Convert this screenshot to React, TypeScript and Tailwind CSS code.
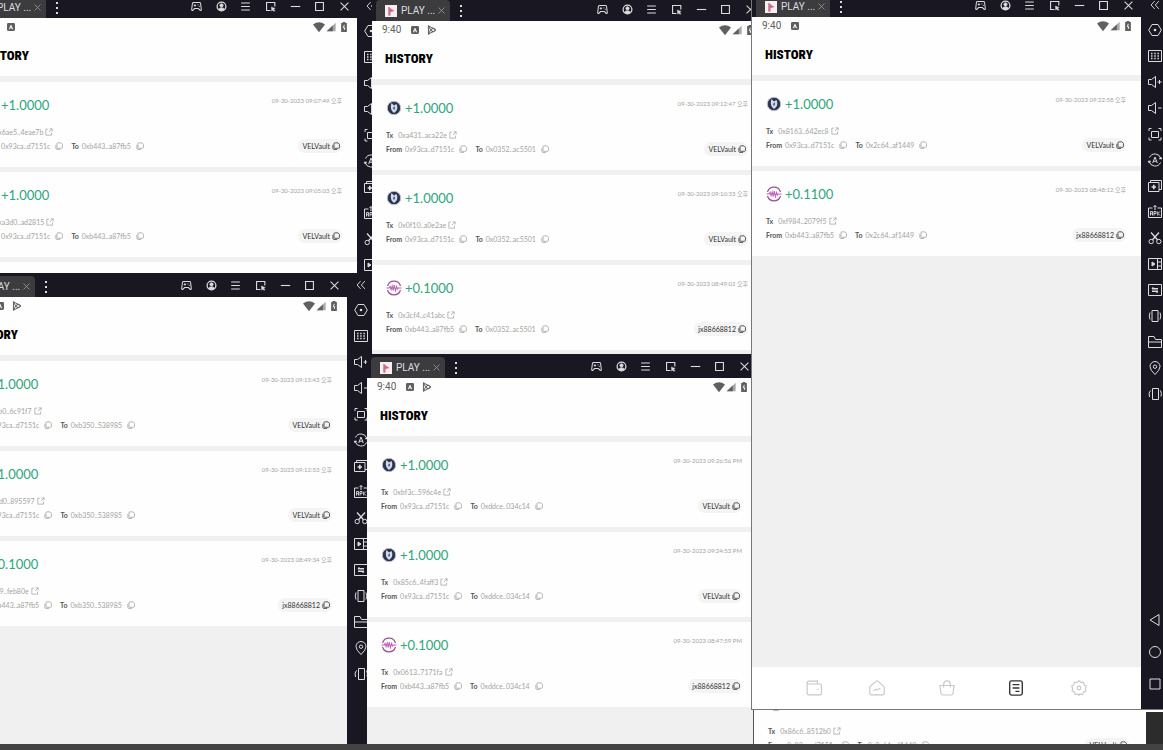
import { ReactNode } from 'react'
import { clsx } from 'clsx'

type Transfer = {
  amount: string
  coin: 'vel' | 'wave'
  date: string
  tx: string
  from: string
  to: string
  tag: string
}

/* ---------- icons ---------- */

function Icon({ className = 'size-3.5', children }: { className?: string; children: ReactNode }) {
  return (
    <svg
      viewBox="0 0 14 14"
      className={clsx('shrink-0', className)}
      fill="none"
      stroke="currentColor"
      strokeWidth="1"
      aria-hidden="true"
    >
      {children}
    </svg>
  )
}

const titleIcons: { label: string; art: ReactNode }[] = [
  {
    label: 'Gamepad',
    art: (
      <>
        <path d="M3.2 2h7.6q1.2 0 1.4 1.2l.9 7.6q0 1.4-1.3 1.2L9.4 9.6H4.6L2.2 12Q.9 12.2.9 10.8l.9-7.6Q2 2 3.2 2z" strokeWidth="1.3" />
        <path d="M3.5 5.6h3M5 4.1v3M8.2 5h1.2M10 6.8h1.2" strokeWidth="1.2" />
      </>
    ),
  },
  {
    label: 'Account',
    art: (
      <>
        <circle cx="7" cy="7" r="5.6" strokeWidth="1.6" />
        <circle cx="7" cy="5.5" r="2" fill="currentColor" />
        <path d="M3 10.5q4-4 8 0-4 3.5-8 0z" fill="currentColor" />
      </>
    ),
  },
  { label: 'Menu', art: <path d="M1.5 2.5h11M1.5 7h11M1.5 11.5h11" strokeWidth="1.4" /> },
  {
    label: 'Resize',
    art: (
      <>
        <path d="M7 12H2V2h10.5v5" strokeWidth="1.4" />
        <path d="M8 7.5l5 2-2 .8 1.6 2-1.2 1-1.6-2-1.2 1.7z" fill="currentColor" strokeWidth=".5" />
      </>
    ),
  },
  { label: 'Minimize', art: <path d="M1 7h12" strokeWidth="1.4" /> },
  { label: 'Maximize', art: <path d="M2 2h10v10H2z" strokeWidth="1.4" /> },
  { label: 'Close', art: <path d="M2 2l10 10M12 2L2 12" strokeWidth="1.3" /> },
]

const sideIcons: { label: string; art: ReactNode }[] = [
  {
    label: 'Settings',
    art: (
      <>
        <path d="M4 1.5h6L13.3 7 10 12.5H4L.7 7z" />
        <circle cx="7" cy="7" r="1.3" fill="currentColor" stroke="none" />
      </>
    ),
  },
  {
    label: 'Keyboard',
    art: (
      <>
        <path d="M.5 1.5h13v11H.5z" />
        <path d="M3 4.5h8M3 7h8M3 9.5h8" strokeDasharray="1.5 1.7" strokeWidth="1.5" />
      </>
    ),
  },
  { label: 'Volume up', art: <path d="M.5 4.5h3l4-3v11l-4-3h-3zM9.5 7h4M11.5 5v4" /> },
  { label: 'Volume down', art: <path d="M.5 4.5h3l4-3v11l-4-3h-3zM10 7h3.5" /> },
  {
    label: 'Full screen',
    art: <path d="M3.5 4.5h7v6h-7zM1 4V1.5h2.5M10.5 1.5H13V4M13 10.5V13h-2.5M3.5 13H1v-2.5" />,
  },
  {
    label: 'Auto rotate',
    art: (
      <>
        <path d="M1.5 4.5a6 6 0 0 1 11.3 1M12.5 9.5A6 6 0 0 1 1.2 8.5" />
        <path d="M11.2 6h3l-1.3-2zM-.2 8h3L1 10z" fill="currentColor" strokeWidth=".5" />
        <path d="M4.7 10L7 4l2.3 6M5.5 8.2h3" />
      </>
    ),
  },
  {
    label: 'Multi instance',
    art: (
      <>
        <path d="M.5 3.5h10.5v9H.5zM2.5 3.5v-2h11v9H11" />
        <path d="M3.6 8h4.4M5.8 5.8v4.4" strokeWidth="1.6" />
      </>
    ),
  },
  {
    label: 'Install APK',
    art: (
      <>
        <path d="M4.5 3H.5v9.5h13V3h-4M7 5V.5M5.5 2L7 .5 8.5 2" />
        <path d="M2.5 10.5v-4h2v2.2h-2M4.5 8.7v1.8M6 10.5v-4h2v2.2H6M9.7 6.5v4M12 6.5l-2 2 2 2" strokeWidth=".9" />
      </>
    ),
  },
  {
    label: 'Cut',
    art: (
      <>
        <circle cx="3.2" cy="10.5" r="2.2" />
        <circle cx="10.8" cy="10.5" r="2.2" />
        <path d="M4.5 8.8L11 1.5M9.5 8.8L3 1.5" strokeWidth="1.3" />
      </>
    ),
  },
  {
    label: 'Record',
    art: (
      <>
        <path d="M.5 1.5h13v11H.5zM9.5 1.5v11M9.5 5h4M9.5 9h4" />
        <path d="M4 5l3 2-3 2z" fill="currentColor" />
      </>
    ),
  },
  {
    label: 'Sync',
    art: (
      <>
        <path d="M.5 1.5h13v11H.5z" />
        <path d="M4 5.8h6M4 8.3h6M5.5 4.5L4 5.8M8.5 9.6L10 8.3" strokeWidth="1.4" />
      </>
    ),
  },
  { label: 'Shake', art: <path d="M4 1.5h6v11H4zM2 3.5Q.5 7 2 10.5M12 3.5q1.5 3.5 0 7" /> },
  { label: 'Folder', art: <path d="M.5 12.5v-11H6L7.5 4.5h6v8zM.5 7h13" /> },
  {
    label: 'Location',
    art: (
      <>
        <path d="M7 13.5Q2 9 2 5.5a5 5 0 0 1 10 0Q12 9 7 13.5z" />
        <circle cx="7" cy="5.7" r="1.7" />
      </>
    ),
  },
  { label: 'Rotate', art: <path d="M4.5 1.5h6v11h-6zM2.5 3.5Q.2 5.5 1.5 10M12.5 3.5q1.5 3 .5 6" /> },
]

const systemKeys: { label: string; art: ReactNode }[] = [
  { label: 'Back', art: <path d="M11 1.5v11L2 7z" /> },
  { label: 'Home', art: <circle cx="7" cy="7" r="5.5" /> },
  { label: 'Recents', art: <path d="M2 2h10v10H2z" /> },
]

function CopyIcon() {
  return (
    <Icon className="size-2">
      <path
        d="M5 1.5h5.5L13 4v5.5q0 1.5-1.5 1.5H5q-1.5 0-1.5-1.5V3Q3.5 1.5 5 1.5zM1.500 5v6q0 2 2 2H9"
        strokeWidth="1.4"
      />
    </Icon>
  )
}

function LinkIcon() {
  return (
    <Icon className="size-2">
      <path d="M5 2H1.5v10.5h10V8M8 1.5h4.5V6M12.5 1.5L7 7" strokeWidth="1.3" />
    </Icon>
  )
}

function Coin({ kind }: { kind: Transfer['coin'] }) {
  if (kind === 'wave') {
    return (
      <svg viewBox="0 0 16 16" className="size-4" fill="none" aria-hidden="true">
        <path d="M1.500 6a6.800 6.800 0 0 1 13 0M1.500 10a6.800 6.800 0 0 0 13 0" stroke="#94568f" strokeWidth="1.200" />
        <path
          d="M.5 8h2.800l.8-1.500 1 3L6.200 6l1 4.500L8.200 5l1.200 5.500L10.600 6.500l.9 2.500.8-1h3.200"
          stroke="#c25fc0"
          strokeWidth="1.100"
        />
      </svg>
    )
  }
  return (
    <svg viewBox="0 0 16 16" className="size-4" fill="none" aria-hidden="true">
      <circle cx="8" cy="8" r="6.7" fill="#2b3450" stroke="#b9bfcc" strokeWidth="1" />
      <path d="M5.500 3L8 5.500 10.500 4q1.800 4-.3 7L8 13l-2-2Q3.800 7.500 5.500 3z" fill="#d5dbe6" />
      <path d="M8 6.500l1 .5-.3 2L8 10l-1-1.500z" fill="#46536f" />
    </svg>
  )
}

/* ---------- app screen ---------- */

function StatusBar({ hasPlay }: { hasPlay?: boolean }) {
  return (
    <div className="flex h-[18px] items-center justify-between pr-2 pl-2.5 text-[#5f5f5f]">
      <div className="flex items-center gap-2">
        <span className="w-5 font-[Roboto,sans-serif] text-[10px] leading-3">9:40</span>
        <Icon className="ml-px size-2">
          <rect x="0" y="0" width="14" height="14" rx="2" fill="currentColor" stroke="none" />
          <path d="M4 11l3-7 3 7M5 8.5h4" stroke="#fff" strokeWidth="1.6" />
        </Icon>
        {hasPlay && (
          <Icon className="size-2.5">
            <path d="M2 1l10.5 6L2 13zM2 1l3 6-3 6M5 7l3.5-3M5 7l3.5 3" strokeWidth="1.4" />
            <circle cx="9" cy="7" r="2.5" />
          </Icon>
        )}
      </div>
      <div className="flex items-center gap-px">
        <Icon className="size-3">
          <path d="M0 4q7-5 14 0L7 13z" fill="currentColor" stroke="none" />
        </Icon>
        <Icon className="size-2.5">
          <path d="M13.5 1v12H1z" fill="currentColor" stroke="none" opacity=".55" />
          <path d="M9.5 5v8H1z" fill="currentColor" stroke="none" />
        </Icon>
        <Icon className="ml-0.5 size-2.5">
          <path d="M5 0h4v1.5h2V14H3V1.5h2z" fill="currentColor" stroke="none" />
          <path d="M7.5 4L6 8h2l-.5 3" stroke="#fff" strokeWidth="1.3" />
        </Icon>
      </div>
    </div>
  )
}

function Address({ label, value, link }: { label: string; value: string; link?: boolean }) {
  return (
    <span className="flex items-center gap-[3px]">
      <b className={clsx('font-bold text-[#555]', link && 'mr-0.5')}>{label}</b>
      {link ? (
        <a href="#tx" className="flex items-center gap-0.5">
          {value}
          <LinkIcon />
        </a>
      ) : (
        <>
          {value}
          <button type="button" aria-label={`Copy ${value}`} className="ml-0.5">
            <CopyIcon />
          </button>
        </>
      )}
    </span>
  )
}

function TransferCard({ item }: { item: Transfer }) {
  return (
    <li className="flex justify-between bg-[#fefefe] py-3.5 pr-[15px] pl-3.5">
      <div className="flex flex-col text-[7px] leading-[14px] whitespace-nowrap text-[#a3a3a3]">
        <div className="mb-[11px] flex h-[18px] items-center gap-[3px]">
          <Coin kind={item.coin} />
          <strong className="text-[13px] font-normal text-[#2ea57c]">{item.amount}</strong>
        </div>
        <Address label="Tx" value={item.tx} link />
        <div className="flex gap-2">
          <Address label="From" value={item.from} />
          <Address label="To" value={item.to} />
        </div>
      </div>
      <div className="flex flex-col items-end justify-between whitespace-nowrap">
        <time className="text-[6px] leading-[10px] text-[#a3a3a3]">{item.date}</time>
        <button
          type="button"
          className="flex h-3.5 items-center gap-0.5 rounded-full bg-[#f4f4f4] pr-0.5 pl-1 text-[7px] text-[#333]"
        >
          {item.tag}
          <CopyIcon />
        </button>
      </div>
    </li>
  )
}

const tabs: { label: string; wide?: boolean; active?: boolean; art: ReactNode }[] = [
  {
    label: 'Wallet',
    art: <path d="M1 2.5Q1 1 2.5 1H10v2.5M1 2.5q0 1 1.5 1H12q1.5 0 1.5 1.5v6.5Q13.500 13 12 13H2.500Q1 13 1 11.500zM9.800 8.300H11" />,
  },
  {
    label: 'Market',
    art: <path d="M7 .8q.5 0 1 .4L13.3 6v5.5q0 1.500-1.500 1.500H2.200Q.7 13 .7 11.500V6L6 1.200q.5-.4 1-.4zM4 9.500l2-1.500 1.500.7L10 7" />,
  },
  {
    label: 'Shop',
    wide: true,
    art: <path d="M.8 4.800h12.400l-1 7q-.2 1.300-1.400 1.300H3.200Q2 13.100 1.800 11.800zM4 6.500V5Q4 .8 7 .8T10 5v1.500" />,
  },
  {
    label: 'History',
    active: true,
    art: (
      <path
        d="M3 .8h8q1.500 0 1.500 1.500v9.400q0 1.500-1.500 1.500H3q-1.500 0-1.500-1.500V2.300Q1.500.8 3 .8zM4 4h6M4 7h6M6.500 10H10"
        strokeWidth="1.200"
      />
    ),
  },
  {
    label: 'Setup',
    art: (
      <>
        <path d="M7 .6l1.700 1.500 2.300-.1.500 2.200 1.900 1.300L12.600 7.500l.4 2.200-2 .9-1 2.100-2.100-.5L7 13.500l-1.200-1.300-2.200.4-.8-2.100-1.900-1L1.400 7.300.6 5.300l1.900-1.200L3 2l2.300.1z" />
        <circle cx="7" cy="7" r="1.600" />
      </>
    ),
  },
]

function TabBar() {
  return (
    <nav className="flex h-[42px] shrink-0 items-center justify-between bg-white px-[54px]">
      {tabs.map((tab) => (
        <button
          key={tab.label}
          type="button"
          aria-label={tab.label}
          className={clsx(tab.wide && 'px-1.5', tab.active ? 'text-[#333]' : 'text-[#c8c8c8]')}
        >
          <Icon className="size-4">{tab.art}</Icon>
        </button>
      ))}
    </nav>
  )
}

/* ---------- emulator window ---------- */

function Emulator({
  className,
  items,
  hasPlay,
  hasTabs,
}: {
  className: string
  items: Transfer[]
  hasPlay?: boolean
  hasTabs?: boolean
}) {
  return (
    <section className={clsx('absolute flex flex-col overflow-hidden bg-[#191722] text-[#dcdce0]', className)}>
      <header className="flex h-6 shrink-0">
        <div className="flex flex-1 items-end justify-between pr-[7px] pl-1">
          <div className="flex items-center">
            <div className="flex h-[21px] w-[74px] items-center gap-1 rounded-t bg-[#3c3c3f] pl-[9px]">
              <svg viewBox="0 0 12 12" className="size-3 shrink-0" aria-hidden="true">
                <path d="M0 0h12v12H0z" fill="#f7eef0" />
                <path d="M3.5 2l6 4-4 1v3.5h-2z" fill="#d8638a" />
                <path d="M3.5 2h1.2v8.5H3.5z" fill="#b0809a" />
              </svg>
              <span className="w-8 font-[Roboto,sans-serif] text-[10px] whitespace-nowrap">PLAY ...</span>
              <button type="button" aria-label="Close tab" className="ml-px text-[#9a9a9c]">
                <Icon className="size-[7px]">
                  <path d="M1 1l12 12M13 1L1 13" strokeWidth="1.6" />
                </Icon>
              </button>
            </div>
            <button type="button" aria-label="More" className="ml-1">
              <Icon>
                <path d="M6 2h2M6 7h2M6 12h2" strokeWidth="2" />
              </Icon>
            </button>
          </div>
          <div className="flex h-full w-[159px] items-center justify-between">
            {titleIcons.map((icon) => (
              <button key={icon.label} type="button" aria-label={icon.label}>
                <Icon className="size-[11px]">{icon.art}</Icon>
              </button>
            ))}
          </div>
        </div>
        <button type="button" aria-label="Collapse" className="flex w-7 items-center justify-center">
          <Icon className="size-2.5">
            <path d="M6.5 1.5L1.5 7l5 5.5M12.5 1.5l-5 5.5 5 5.5" strokeWidth="1.3" />
          </Icon>
        </button>
      </header>

      <div className="flex min-h-0 flex-1">
        <main className="flex min-w-0 flex-1 flex-col bg-[#f0f0f1] font-[Lato,'Noto_Sans_CJK_KR',sans-serif]">
          <div className="h-[58px] shrink-0 bg-[#fefefe]">
            <StatusBar hasPlay={hasPlay} />
            <h1 className="mt-3 pl-[13px] font-['Roboto_Condensed',Roboto,sans-serif] text-[13px] leading-4 font-black text-black">
              HISTORY
            </h1>
          </div>
          <ul className="mt-1.5 flex min-h-0 flex-1 flex-col gap-[5px]">
            {items.map((item) => (
              <TransferCard key={item.tx} item={item} />
            ))}
          </ul>
          {hasTabs && <TabBar />}
        </main>

        <aside className="flex w-7 shrink-0 flex-col justify-between">
          <div>
            {sideIcons.map((icon) => (
              <button
                key={icon.label}
                type="button"
                aria-label={icon.label}
                className="flex h-[26px] w-full items-center justify-center"
              >
                <Icon>{icon.art}</Icon>
              </button>
            ))}
          </div>
          {hasTabs && (
            <div className="pb-[9px]">
              {systemKeys.map((icon) => (
                <button
                  key={icon.label}
                  type="button"
                  aria-label={icon.label}
                  className="flex h-8 w-full items-center justify-center"
                >
                  <Icon>{icon.art}</Icon>
                </button>
              ))}
            </div>
          )}
        </aside>
      </div>
    </section>
  )
}

/* ---------- data ---------- */

const vel = (date: string, tx: string, to: string): Transfer => ({
  amount: '+1.0000',
  coin: 'vel',
  date,
  tx,
  from: '0x93ca..d7151c',
  to,
  tag: 'VELVault',
})

const wave = (amount: string, date: string, tx: string, to: string): Transfer => ({
  amount,
  coin: 'wave',
  date,
  tx,
  from: '0xb443..a87fb5',
  to,
  tag: 'jx88668812',
})

const topLeft = [
  vel('09-30-2023 09:07:49 오후', '0x6ae5..4eae7b', '0xb443..a87fb5'),
  vel('09-30-2023 09:05:03 오후', '0xa3d0..ad2815', '0xb443..a87fb5'),
  vel('09-30-2023 09:02:18 오후', '0x19c4..b07e52', '0xb443..a87fb5'),
]

const bottomLeft = [
  vel('09-30-2023 09:15:43 오후', '0x2cb0..6c91f7', '0xb350..538985'),
  vel('09-30-2023 09:12:53 오후', '0x41d0..895597', '0xb350..538985'),
  wave('+0.1000', '09-30-2023 08:49:34 오후', '0x7ff9..feb80e', '0xb350..538985'),
]

const topMiddle = [
  vel('09-30-2023 09:12:47 오후', '0xa431..aca22e', '0x0352..ac5501'),
  vel('09-30-2023 09:10:33 오후', '0x0f10..a0e2ae', '0x0352..ac5501'),
  wave('+0.1000', '09-30-2023 08:49:02 오후', '0x3cf4..c41abc', '0x0352..ac5501'),
]

const bottomMiddle = [
  vel('09-30-2023 09:26:56 PM', '0xbf3c..596c4e', '0xddce..034c14'),
  vel('09-30-2023 09:24:53 PM', '0x85c6..4faff3', '0xddce..034c14'),
  wave('+0.1000', '09-30-2023 08:47:59 PM', '0x0613..7171fa', '0xddce..034c14'),
]

const right = [
  vel('09-30-2023 09:22:58 오후', '0x8163..642ec8', '0x2c64..af1449'),
  wave('+0.1100', '09-30-2023 08:48:12 오후', '0xf984..2079f5', '0x2c64..af1449'),
]

const behind = [vel('09-30-2023 09:20:31 오후', '0x86c6..8512b0', '0x2c64..af1449')]

export default function App() {
  return (
    <div className="flex h-screen flex-col overflow-hidden bg-[#434343]">
      <div className="relative flex-1 overflow-hidden bg-[#f0f0f1]">
        <Emulator className="-top-1.5 -left-8 h-[290px] w-[417px]" items={topLeft} />
        <Emulator className="top-[273px] bottom-0 -left-[43px] w-[418px]" items={bottomLeft} hasPlay />
        <Emulator className="-top-[3px] left-[372px] h-[360px] w-[419px]" items={topMiddle} hasPlay />
        <Emulator className="top-[354px] bottom-0 left-[367px] w-[418px]" items={bottomMiddle} hasPlay />
        <Emulator
          className="top-[593px] bottom-0 left-[753px] w-[419px] border-l border-[#55555a]"
          items={behind}
        />
        <div className="absolute top-[710px] right-0 bottom-0 left-[1144px] border-t-2 border-l-2 border-white bg-[#2d2c2d]" />
        <Emulator
          className="-top-[7px] left-[751px] h-[717px] w-[418px] border-b border-l border-[#77777a]"
          items={right}
          hasTabs
        />
      </div>
      <footer className="h-1.5 shrink-0 bg-[#434343]" />
    </div>
  )
}
